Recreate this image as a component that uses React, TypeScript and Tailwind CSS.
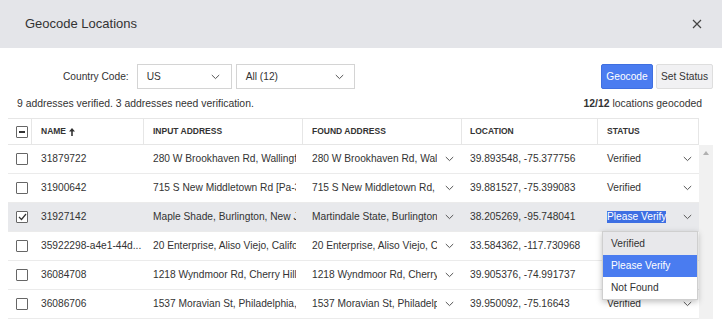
import React from 'react';

type Row = {
  name: string;
  input: string;
  found: string;
  loc: string;
  status: string;
  selected?: boolean;
};

const rows: Row[] = [
  { name: '31879722', input: '280 W Brookhaven Rd, Wallingford, Pennsylvania', found: '280 W Brookhaven Rd, Wallingford, PA', loc: '39.893548, -75.377756', status: 'Verified' },
  { name: '31900642', input: '715 S New Middletown Rd [Pa-352], Media, PA', found: '715 S New Middletown Rd, Media, PA', loc: '39.881527, -75.399083', status: 'Verified' },
  { name: '31927142', input: 'Maple Shade, Burlington, New Jersey', found: 'Martindale State, Burlington, NJ', loc: '38.205269, -95.748041', status: 'Please Verify', selected: true },
  { name: '35922298-a4e1-44d...', input: '20 Enterprise, Aliso Viejo, California', found: '20 Enterprise, Aliso Viejo, CA', loc: '33.584362, -117.730968', status: 'Please Verify' },
  { name: '36084708', input: '1218 Wyndmoor Rd, Cherry Hill, NJ', found: '1218 Wyndmoor Rd, Cherry Hill, NJ', loc: '39.905376, -74.991737', status: 'Please Verify' },
  { name: '36086706', input: '1537 Moravian St, Philadelphia, PA', found: '1537 Moravian St, Philadelphia, PA', loc: '39.950092, -75.16643', status: 'Verified' },
];

const cols = 'grid grid-cols-[24px_112px_159px_159px_136px_101px]';

function Chevron() {
  return (
    <svg width="9" height="6" viewBox="0 0 9 6" className="shrink-0">
      <polyline points="0.8,1 4.5,4.6 8.2,1" fill="none" stroke="#555" strokeWidth="1" />
    </svg>
  );
}

function Checkbox({ state }: { state?: 'checked' | 'mixed' }) {
  return (
    <div className="w-3 h-3 border border-[#666] rounded-[1px] bg-white flex items-center justify-center">
      {state === 'mixed' && <div className="w-[6px] h-[2px] bg-[#333]" />}
      {state === 'checked' && (
        <svg width="9" height="8" viewBox="0 0 9 8">
          <polyline points="1,4 3.5,6.5 8,1" fill="none" stroke="#333" strokeWidth="1.2" />
        </svg>
      )}
    </div>
  );
}

export default function App() {
  return (
    <div className="w-[722px] h-[319px] overflow-hidden bg-white text-[#333] font-['Liberation_Sans',Arial,sans-serif]">
      {/* Modal header */}
      <div className="h-12 bg-[#e4e5e9] flex items-center justify-between pl-[25px] pr-5">
        <h1 className="text-[13px]">Geocode Locations</h1>
        <svg width="10" height="10" viewBox="0 0 10 10">
          <path d="M1 1 L9 9 M9 1 L1 9" stroke="#444" strokeWidth="1.2" />
        </svg>
      </div>

      <div className="pl-2 pr-[9px]">
        {/* Toolbar */}
        <div className="flex items-center justify-between pt-4">
          <div className="flex items-center pl-[55px] text-[10.2px]">
            <span className="mr-2">Country Code:</span>
            <div className="w-[95px] h-[25px] border border-[#d4d4d4] flex items-center justify-between pl-[9px] pr-[11px] mr-1">
              <span>US</span>
              <Chevron />
            </div>
            <div className="w-[119px] h-[25px] border border-[#d4d4d4] flex items-center justify-between pl-[9px] pr-[10px]">
              <span>All (12)</span>
              <Chevron />
            </div>
          </div>
          <div className="flex items-center gap-[3px] text-[10.2px]">
            <button className="h-[25px] w-[52px] rounded-[2px] bg-[#4a7cf0] text-white border border-[#3f6fe0]">Geocode</button>
            <button className="h-[25px] w-[57px] rounded-[2px] bg-[#f1f1f3] border border-[#dedede]">Set Status</button>
          </div>
        </div>

        {/* Summary line */}
        <div className="flex justify-between text-[10.4px] pl-[9px] pr-[11px] mt-[9px] leading-3">
          <span>9 addresses verified. 3 addresses need verification.</span>
          <span><b>12/12</b> locations geocoded</span>
        </div>

        {/* Table */}
        <div className="mt-[8px]">
          <div className="flex">
            <div className={`${cols} h-[27px] border-y border-[#e6e6e6] text-[8.5px] font-bold uppercase`}>
              <div className="border-r border-[#e6e6e6] flex items-center pl-2">
                <Checkbox state="mixed" />
              </div>
              <div className="border-r border-[#e6e6e6] flex items-center pl-[9px] gap-[3px]">
                <span>Name</span>
                <svg width="6" height="8" viewBox="0 0 6 8">
                  <path d="M3 0 L6 3.5 L3.8 3.5 L3.8 8 L2.2 8 L2.2 3.5 L0 3.5 Z" fill="#333" />
                </svg>
              </div>
              <div className="border-r border-[#e6e6e6] flex items-center pl-[9px]">Input Address</div>
              <div className="border-r border-[#e6e6e6] flex items-center pl-[9px]">Found Address</div>
              <div className="border-r border-[#e6e6e6] flex items-center pl-2">Location</div>
              <div className="border-r border-[#e6e6e6] flex items-center pl-[9px]">Status</div>
            </div>
          </div>

          <div className="flex">
            <div className="flex flex-col">
              {rows.map((r) => (
                <div
                  key={r.name}
                  className={`${cols} h-[29px] border-b border-[#ebebeb] text-[10.2px] ${r.selected ? 'bg-[#e8e9ec]' : ''}`}
                >
                  <div className="flex items-center pl-2">
                    <Checkbox state={r.selected ? 'checked' : undefined} />
                  </div>
                  <div className="flex items-center pl-[9px] whitespace-nowrap overflow-hidden">{r.name}</div>
                  <div className="flex items-center pl-[9px] pr-[7px]">
                    <div className="overflow-hidden whitespace-nowrap">{r.input}</div>
                  </div>
                  <div className="flex items-center pl-[9px] pr-2 gap-[8px]">
                    <div className="flex-1 overflow-hidden whitespace-nowrap">{r.found}</div>
                    <Chevron />
                  </div>
                  <div className="flex items-center pl-2 whitespace-nowrap">{r.loc}</div>
                  <div className="relative flex items-center justify-between pl-[9px] pr-[7px]">
                    {r.selected ? (
                      <span className="bg-[#3d6fe3] text-white leading-[12px]">{r.status}</span>
                    ) : (
                      <span>{r.status}</span>
                    )}
                    <Chevron />
                    {r.selected && (
                      <div className="absolute left-[4px] top-full w-[96px] z-10 bg-white border border-[#cfcfcf] shadow-[0_2px_6px_rgba(0,0,0,0.25)] text-[10.2px]">
                        <div className="h-[23px] flex items-center pl-2 bg-[#e8e8eb]">Verified</div>
                        <div className="h-[22px] flex items-center pl-2 bg-[#4a7cf0] text-white">Please Verify</div>
                        <div className="h-[22px] flex items-center pl-2">Not Found</div>
                      </div>
                    )}
                  </div>
                </div>
              ))}
            </div>
            {/* Scrollbar */}
            <div className="w-[14px] bg-[#f1f1f1] flex justify-center pt-[6px]">
              <svg width="6" height="4" viewBox="0 0 6 4">
                <path d="M3 0 L6 4 L0 4 Z" fill="#b0b0b0" />
              </svg>
            </div>
          </div>
        </div>
      </div>
    </div>
  );
}
